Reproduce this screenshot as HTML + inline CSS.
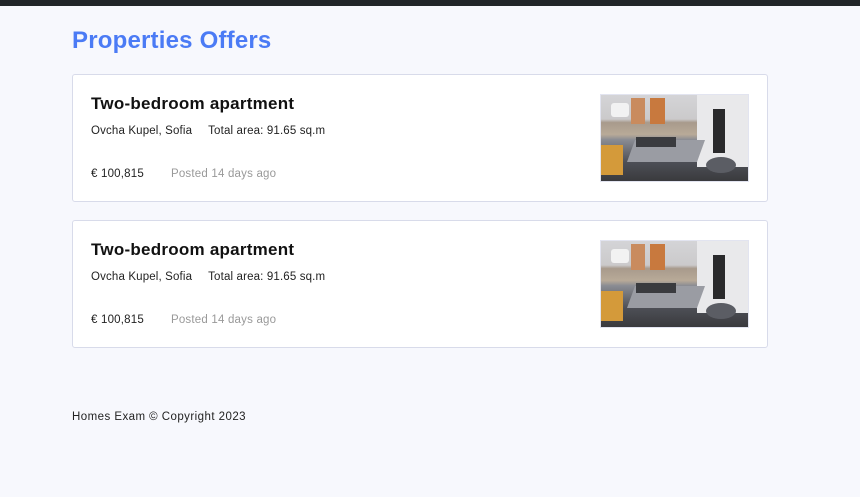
<!DOCTYPE html>
<html><head><meta charset="utf-8"><style>
*{margin:0;padding:0;box-sizing:border-box}
body{width:860px;height:497px;background:#f7f8fd;font-family:"Liberation Sans",sans-serif;position:relative;overflow:hidden}
.top{position:absolute;left:0;top:0;width:860px;height:6px;background:#212529}
h1{position:absolute;left:72px;top:27px;font-size:24px;font-weight:bold;color:#4b7bf5;letter-spacing:0.2px}
.card{position:absolute;left:72px;width:696px;height:128px;background:#fff;border:1px solid #d8dbea;border-radius:3px}
.t{position:absolute;left:18px;top:19px;font-size:17px;font-weight:bold;color:#111;letter-spacing:0.25px}
.m{position:absolute;left:18px;top:50px;font-size:11.5px;color:#222;letter-spacing:0.15px}
.m span{margin-left:16px}
.p{position:absolute;left:18px;top:93px;font-size:11.5px;color:#222;letter-spacing:0.2px}
.p span{margin-left:27px;color:#999}
.img{position:absolute;left:527px;top:19px;width:149px;height:88px;overflow:hidden;border:1px solid #e2e4f0;background:linear-gradient(180deg,#d4d4d7 0%,#cbcacb 28%,#a89a8c 32%,#b8aa98 46%,#8a8c93 52%,#4d4f56 78%,#3a3a3d 100%)}
.img div{position:absolute}
</style></head><body>
<div class="top"></div>
<h1>Properties Offers</h1>
<div class="card" style="top:74px">
<div class="t">Two-bedroom apartment</div>
<div class="m">Ovcha Kupel, Sofia<span>Total area: 91.65 sq.m</span></div>
<div class="p">€ 100,815<span>Posted 14 days ago</span></div>
<div class="img">
<div style="left:96px;top:0;width:53px;height:72px;background:#e9e9eb"></div>
<div style="left:112px;top:14px;width:12px;height:44px;background:#2a2a2c"></div>
<div style="left:30px;top:3px;width:14px;height:26px;background:#c98b5e"></div>
<div style="left:49px;top:3px;width:15px;height:26px;background:#c8793e"></div>
<div style="left:10px;top:8px;width:18px;height:14px;background:#f2f2f2;border-radius:3px"></div>
<div style="left:30px;top:45px;width:70px;height:22px;background:#9a9ca3;transform:skewX(-20deg)"></div>
<div style="left:35px;top:42px;width:40px;height:10px;background:#3a3b3f"></div>
<div style="left:0;top:50px;width:22px;height:30px;background:#d49a3a"></div>
<div style="left:105px;top:62px;width:30px;height:16px;background:#5b5d64;border-radius:50%"></div>
</div>
</div>
<div class="card" style="top:220px">
<div class="t">Two-bedroom apartment</div>
<div class="m">Ovcha Kupel, Sofia<span>Total area: 91.65 sq.m</span></div>
<div class="p">€ 100,815<span>Posted 14 days ago</span></div>
<div class="img">
<div style="left:96px;top:0;width:53px;height:72px;background:#e9e9eb"></div>
<div style="left:112px;top:14px;width:12px;height:44px;background:#2a2a2c"></div>
<div style="left:30px;top:3px;width:14px;height:26px;background:#c98b5e"></div>
<div style="left:49px;top:3px;width:15px;height:26px;background:#c8793e"></div>
<div style="left:10px;top:8px;width:18px;height:14px;background:#f2f2f2;border-radius:3px"></div>
<div style="left:30px;top:45px;width:70px;height:22px;background:#9a9ca3;transform:skewX(-20deg)"></div>
<div style="left:35px;top:42px;width:40px;height:10px;background:#3a3b3f"></div>
<div style="left:0;top:50px;width:22px;height:30px;background:#d49a3a"></div>
<div style="left:105px;top:62px;width:30px;height:16px;background:#5b5d64;border-radius:50%"></div>
</div>
</div>
<div style="position:absolute;left:72px;top:411px;font-size:11.5px;color:#222;letter-spacing:0.45px">Homes Exam © Copyright 2023</div>
</body></html>
